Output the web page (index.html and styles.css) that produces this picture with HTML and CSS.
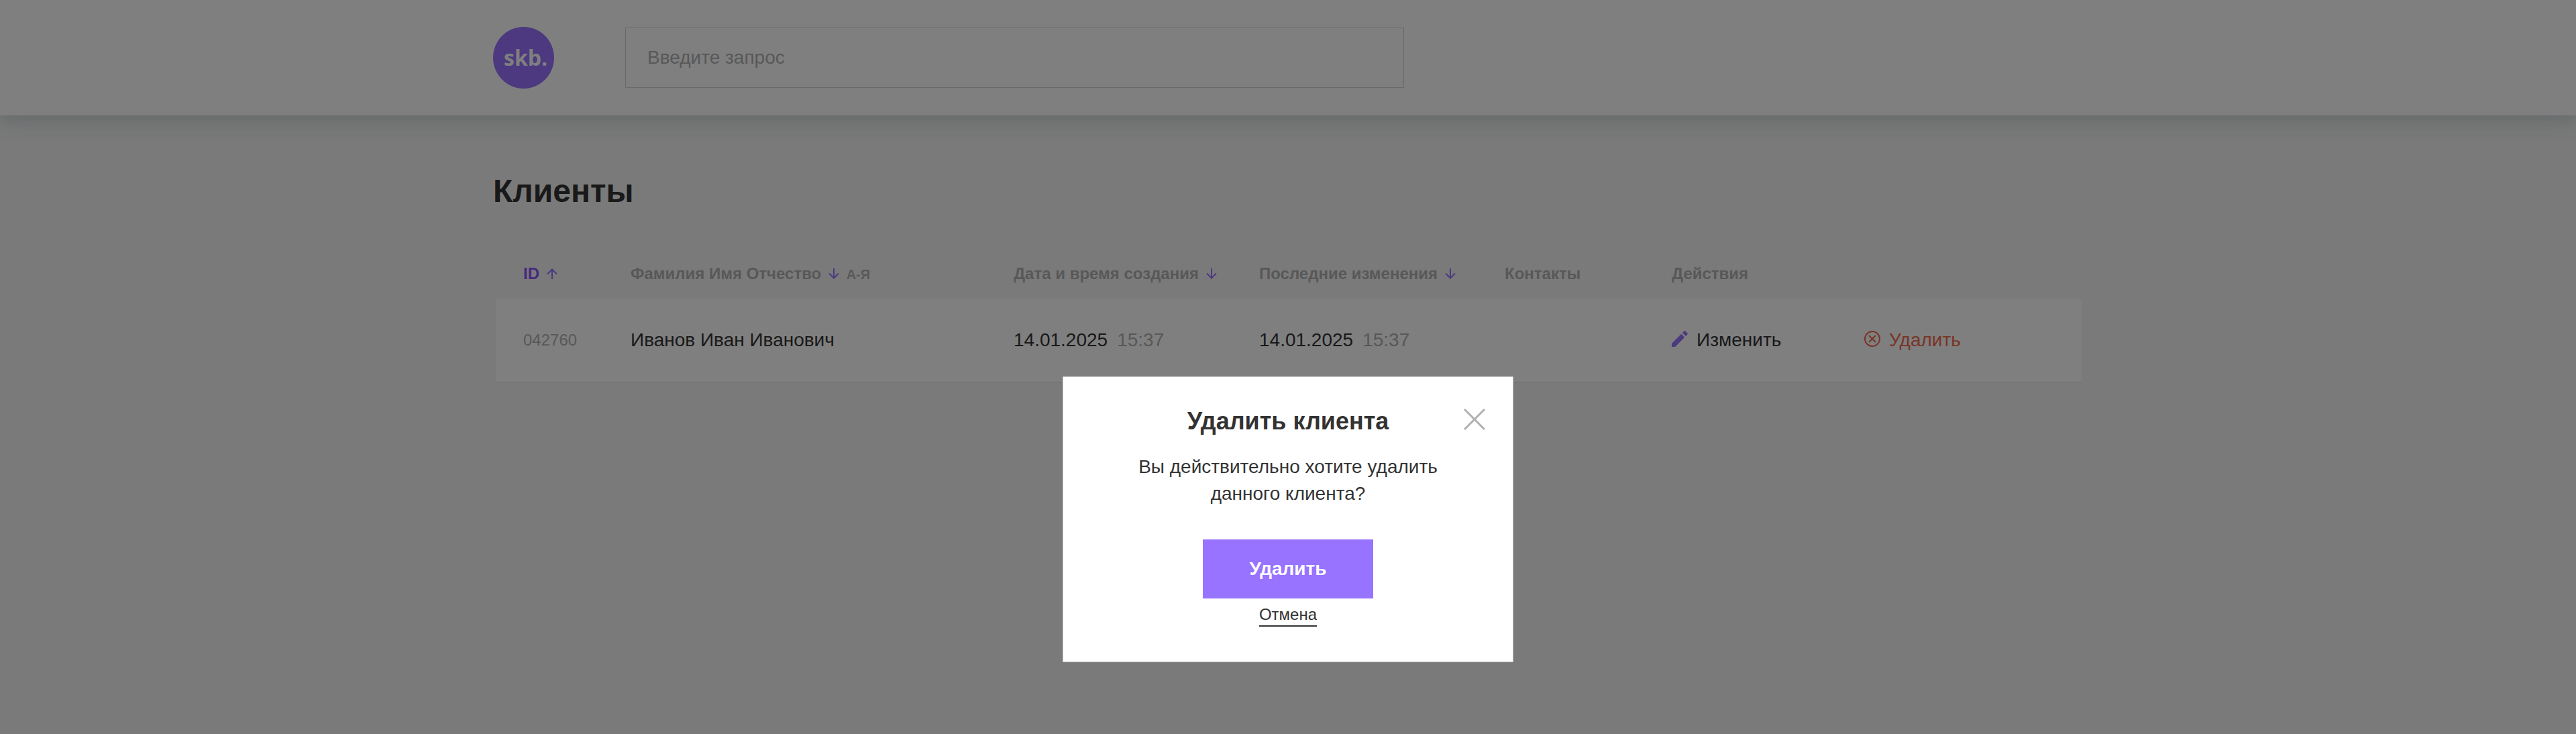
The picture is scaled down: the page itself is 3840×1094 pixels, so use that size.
FILE: index.html
```html
<!DOCTYPE html>
<html lang="ru">
<head>
<meta charset="utf-8">
<meta name="viewport" content="width=device-width, initial-scale=1">
<title>Клиенты</title>
<link rel="stylesheet" href="styles.css">
</head>
<body>
<header class="header">
  <div class="container header__inner">
    <a class="logo" href="#" aria-label="skb.">skb.</a>
    <input class="search" type="search" placeholder="Введите запрос" aria-label="Поиск">
  </div>
</header>
<main class="container main">
  <h1 class="title">Клиенты</h1>
  <table class="clients">
    <colgroup>
      <col class="col-id">
      <col class="col-name">
      <col class="col-date">
      <col class="col-date">
      <col class="col-contacts">
      <col class="col-edit">
      <col>
    </colgroup>
    <thead>
      <tr>
        <th><button class="sort sort--active" type="button">ID <svg class="arrow" viewBox="0 0 16 16"><path d="M8 16V1.500M1 8.500L8 1.500L15 8.500"/></svg></button></th>
        <th><button class="sort" type="button">Фамилия Имя Отчество <svg class="arrow" viewBox="0 0 16 16"><path d="M8 0V14.500M1 7.500L8 14.500L15 7.500"/></svg> <span class="sort__hint">А-Я</span></button></th>
        <th><button class="sort" type="button">Дата и время создания <svg class="arrow" viewBox="0 0 16 16"><path d="M8 0V14.500M1 7.500L8 14.500L15 7.500"/></svg></button></th>
        <th><button class="sort" type="button">Последние изменения <svg class="arrow" viewBox="0 0 16 16"><path d="M8 0V14.500M1 7.500L8 14.500L15 7.500"/></svg></button></th>
        <th>Контакты</th>
        <th colspan="2">Действия</th>
      </tr>
    </thead>
    <tbody>
      <tr>
        <td class="id">042760</td>
        <td>Иванов Иван Иванович</td>
        <td>14.01.2025<span class="time">15:37</span></td>
        <td>14.01.2025<span class="time">15:37</span></td>
        <td></td>
        <td><button class="action" type="button"><svg class="action__icon action__icon--edit" viewBox="0 0 24 24"><path d="M0 19V24H5L19.200 9.800L14.200 4.800ZM23.400 5.600C24 5 24 4.300 23.400 3.700L20.300 0.600C19.700 0 19 0 18.400 0.600L15.900 3.100L20.900 8.100Z"/></svg>Изменить</button></td>
        <td><button class="action action--delete" type="button"><svg class="action__icon" viewBox="0 0 24 24"><path d="M12 1A11 11 0 1 0 12 23A11 11 0 1 0 12 1ZM7 7L17 17M17 7L7 17"/></svg>Удалить</button></td>
      </tr>
    </tbody>
  </table>
</main>
<div class="overlay">
  <section class="modal" role="dialog" aria-modal="true" aria-labelledby="modal-title">
    <button class="modal__close" type="button" aria-label="Закрыть"><svg viewBox="0 0 32 32"><path d="M1 1L31 31M31 1L1 31"/></svg></button>
    <h2 class="modal__title" id="modal-title">Удалить клиента</h2>
    <p class="modal__text">Вы действительно хотите удалить данного клиента?</p>
    <button class="modal__submit" type="button">Удалить</button>
    <button class="modal__cancel" type="button">Отмена</button>
  </section>
</div>
</body>
</html>
```
FILE: styles.css
```css
*,
*::before,
*::after {
  box-sizing: border-box;
}

body {
  margin: 0;
  min-height: 100vh;
  background: #f5f5f5;
  color: #333;
  font: 28px/40px "Liberation Sans", Arial, sans-serif;
}

button {
  padding: 0;
  border: 0;
  background: none;
  color: inherit;
  font: inherit;
  cursor: pointer;
}

.container {
  max-width: 2370px;
  margin: 0 auto;
}

.header {
  padding: 40px 0;
  background: #fff;
  box-shadow: 0 6px 15px rgba(176, 190, 197, 0.32), 0 18px 33px rgba(176, 190, 190, 0.32);
}

.header__inner {
  display: flex;
  align-items: center;
  gap: 106px;
}

.logo {
  flex: none;
  width: 91px;
  height: 92px;
  padding-left: 16px;
  border-radius: 50%;
  background: #9873ff;
  color: #fff;
  font: 700 32px/92px "Open Sans", sans-serif;
  text-decoration: none;
}

.search {
  flex: 0 1 1161px;
  min-width: 0;
  height: 90px;
  padding: 0 32px;
  border: 1px solid #d4d4d4;
  border-radius: 0;
  background: #fff;
  color: inherit;
  font: inherit;
  appearance: none;
}

.search::placeholder {
  color: #b0b0b0;
  opacity: 1;
}

.title {
  margin: 0;
  padding: 81px 0 63px;
  font-size: 48px;
  line-height: 64px;
}

.clients {
  width: calc(100% - 6px);
  margin-left: 4px;
  border-collapse: collapse;
  table-layout: fixed;
}

.col-id {
  width: 201px;
}

.col-name {
  width: 571px;
}

.col-date {
  width: 366px;
}

.col-contacts {
  width: 249px;
}

.col-edit {
  width: 287px;
}

th,
td {
  padding: 0;
  text-align: left;
  white-space: nowrap;
}

th {
  height: 65px;
  padding-bottom: 9px;
  color: #b0b0b0;
  font-size: 24px;
  line-height: 32px;
}

th:first-child,
td:first-child {
  padding-left: 41px;
}

.sort--active {
  color: #8c50ff;
}

.arrow {
  width: 16px;
  height: 16px;
  margin-left: 4px;
  fill: none;
  stroke: #9873ff;
  stroke-width: 2;
}

.sort__hint {
  margin-left: 4px;
  font-size: 20px;
}

tbody tr {
  background: #fff;
  box-shadow: 0 2px 0 #ececec;
}

td {
  height: 124px;
}

.id {
  color: #b0b0b0;
  font-size: 24px;
}

.time {
  margin-left: 14px;
  color: #b0b0b0;
}

.action {
  display: flex;
  align-items: center;
  gap: 13px;
}

.action__icon {
  width: 24px;
  height: 24px;
  margin-bottom: 4px;
  fill: none;
  stroke: #f06a4d;
  stroke-width: 2;
}

.action__icon--edit {
  fill: #9873ff;
  stroke: none;
}

.action--delete {
  color: #f06a4d;
}

.overlay {
  position: fixed;
  inset: 0;
  display: flex;
  justify-content: center;
  align-items: flex-start;
  padding-top: 561px;
  background: rgba(0, 0, 0, 0.5);
}

.modal {
  position: relative;
  display: flex;
  flex-direction: column;
  align-items: center;
  width: 672px;
  padding: 42px 100px 52px;
  border: 1px solid #c8c8c8;
  background: #fff;
  text-align: center;
}

.modal__close {
  position: absolute;
  top: 47px;
  right: 41px;
  width: 32px;
  height: 32px;
}

.modal__close svg {
  display: block;
  fill: none;
  stroke: #b0b0b0;
  stroke-width: 3;
}

.modal__title {
  margin: 0 0 24px;
  font-size: 36px;
  line-height: 48px;
}

.modal__text {
  margin: 0 0 48px;
}

.modal__submit {
  padding: 24px 70px;
  background: #9873ff;
  color: #fff;
  font-weight: 700;
}

.modal__cancel {
  margin-top: 8px;
  border-bottom: 2px solid #333;
  font-size: 24px;
  line-height: 32px;
}
```
